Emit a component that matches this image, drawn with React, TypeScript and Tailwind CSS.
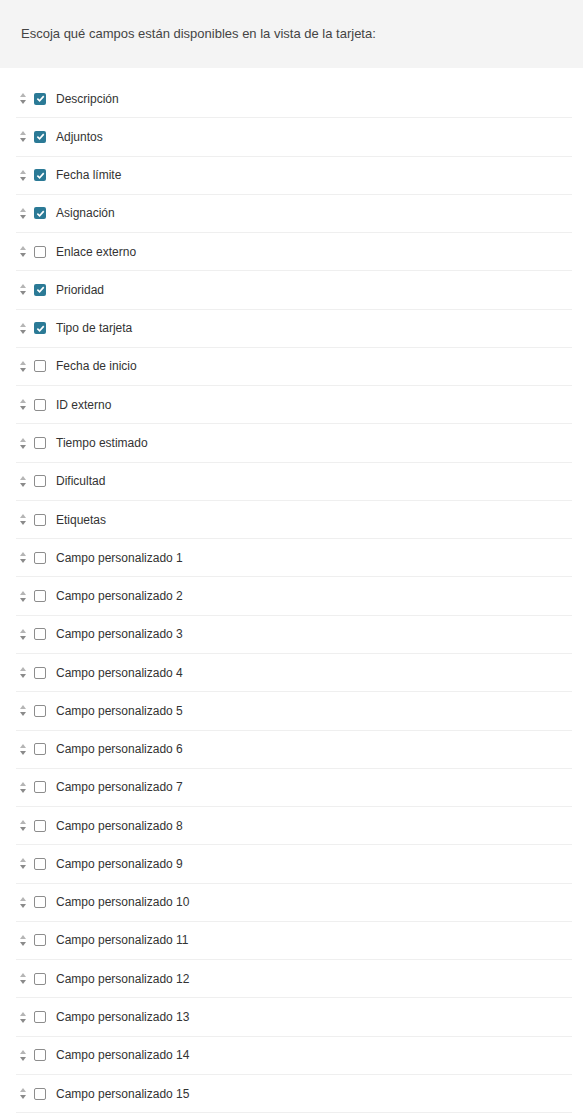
import React from 'react';

interface Field {
  label: string;
  checked: boolean;
}

const fields: Field[] = [
  { label: 'Descripción', checked: true },
  { label: 'Adjuntos', checked: true },
  { label: 'Fecha límite', checked: true },
  { label: 'Asignación', checked: true },
  { label: 'Enlace externo', checked: false },
  { label: 'Prioridad', checked: true },
  { label: 'Tipo de tarjeta', checked: true },
  { label: 'Fecha de inicio', checked: false },
  { label: 'ID externo', checked: false },
  { label: 'Tiempo estimado', checked: false },
  { label: 'Dificultad', checked: false },
  { label: 'Etiquetas', checked: false },
  ...Array.from({ length: 15 }, (_, i) => ({
    label: `Campo personalizado ${i + 1}`,
    checked: false,
  })),
];

const SortHandle = () => (
  <svg width="6" height="11" viewBox="0 0 6 11" className="shrink-0">
    <path d="M3 0 L6 4 L0 4 Z" fill="#b5b5b5" />
    <path d="M3 11 L6 7 L0 7 Z" fill="#8a8a8a" />
  </svg>
);

const Checkbox = ({ checked }: { checked: boolean }) =>
  checked ? (
    <span className="ml-[8px] flex h-[12px] w-[12px] shrink-0 items-center justify-center rounded-[2px] bg-[#2b7a96]">
      <svg width="9" height="9" viewBox="0 0 10 10">
        <path d="M1.5 5.2 L4 7.6 L8.6 2.4" stroke="#fff" strokeWidth="1.8" fill="none" />
      </svg>
    </span>
  ) : (
    <span className="ml-[8px] block h-[12px] w-[12px] shrink-0 rounded-[2px] border border-[#8d8d8d] bg-white" />
  );

export default function App() {
  return (
    <div className="min-h-[1114px] w-[583px] bg-white font-['Liberation_Sans',Arial,sans-serif]">
      <div className="flex h-[68px] items-center bg-[#f4f4f4] pl-[21px] text-[13px] text-[#444]">
        Escoja qué campos están disponibles en la vista de la tarjeta:
      </div>
      <ul className="ml-[16px] mr-[11px] mt-[12px]">
        {fields.map((field, index) => (
          <li
            key={`${field.label}-${index}`}
            className="flex h-[38.27px] items-center border-b border-[#efefef] pl-[4px] text-[12px] text-[#333]"
          >
            <SortHandle />
            <Checkbox checked={field.checked} />
            <span className="ml-[10px]">{field.label}</span>
          </li>
        ))}
      </ul>
    </div>
  );
}
